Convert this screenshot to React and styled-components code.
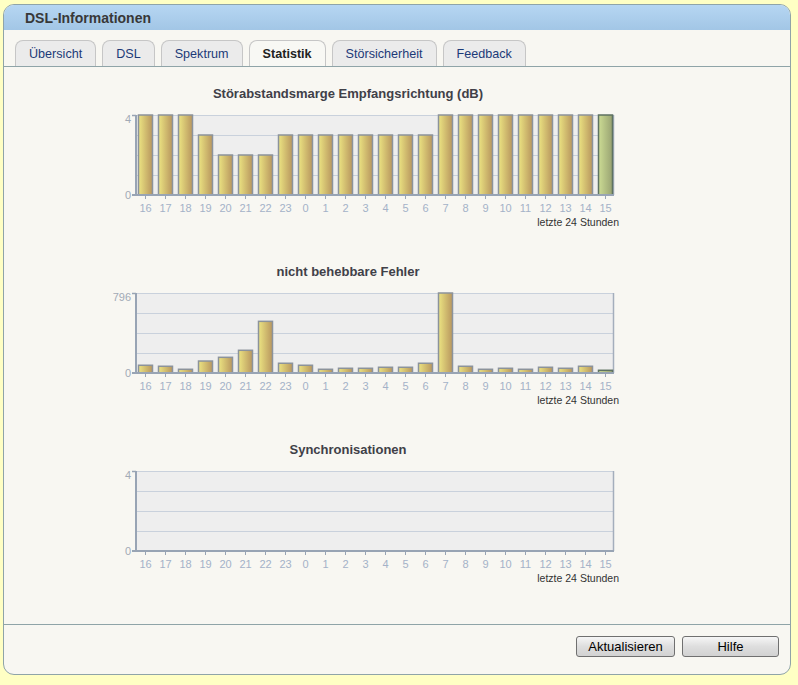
import React from "react";
import styled, { createGlobalStyle } from "styled-components";

const GlobalStyle = createGlobalStyle`
  html, body { margin: 0; padding: 0; }
  body {
    background: #ffffc4;
    font-family: "Liberation Sans", Arial, sans-serif;
    width: 798px;
    height: 685px;
    overflow: hidden;
  }
`;

const Page = styled.div`
  padding: 4px 7px 0 3px;
`;

const Panel = styled.div`
  width: 786px;
  border: 1px solid #8fa4a8;
  border-radius: 11px;
  background: #f8f7f2;
  overflow: hidden;
`;

const Header = styled.div`
  height: 25px;
  background: linear-gradient(to bottom, #b6d6f2, #a2c6e6);
  padding-left: 21px;
  display: flex;
  align-items: center;
  font-size: 14px;
  font-weight: bold;
  color: #383838;
`;

const TabBar = styled.div`
  display: flex;
  gap: 6px;
  padding: 10px 0 0 11px;
  border-bottom: 1px solid #8fa4a8;
`;

const Tab = styled.div`
  height: 25px;
  padding: 0 13px;
  display: flex;
  align-items: center;
  border: 1px solid #c6c6c6;
  border-bottom: none;
  border-radius: 8px 8px 0 0;
  background: ${(p) => (p.$active ? "#f8f8f4" : "#ebebeb")};
  color: ${(p) => (p.$active ? "#222" : "#1c3a78")};
  font-weight: ${(p) => (p.$active ? "bold" : "normal")};
  font-size: 12.6px;
`;

const Content = styled.div`
  height: 538px;
  padding-top: 19px;
  border-bottom: 1px solid #8fa4a8;
  display: flex;
  flex-direction: column;
  gap: 32px;
`;

const ChartBlock = styled.div`
  margin-left: 94px;
  display: flex;
  flex-direction: column;
  gap: 8px;
`;

const ChartTitle = styled.div`
  width: 500px;
  text-align: center;
  font-size: 13px;
  line-height: 16px;
  font-weight: bold;
  color: #404048;
`;

const Footer = styled.div`
  height: 49px;
  display: flex;
  justify-content: flex-end;
  align-items: flex-start;
  gap: 7px;
  padding: 11px 11px 0 0;
  box-sizing: border-box;
`;

const Button = styled.button`
  height: 21px;
  width: ${(p) => p.$w}px;
  padding: 0;
  border: 1px solid #707070;
  border-radius: 3px;
  background: linear-gradient(to bottom, #f6f6f6, #dedede 50%, #d2d2d2);
  font-family: "Liberation Sans", Arial, sans-serif;
  font-size: 13px;
  color: #000;
`;

const hours = [16, 17, 18, 19, 20, 21, 22, 23, 0, 1, 2, 3, 4, 5, 6, 7, 8, 9, 10, 11, 12, 13, 14, 15];

const X0 = 38;
const Y0 = 5;
const PW = 478;
const PH = 80;

function Chart({ id, max, values }) {
  return (
    <svg width="530" height="122" style={{ display: "block" }}>
      <defs>
        <linearGradient id={`g${id}`} x1="0" x2="1" y1="0" y2="0">
          <stop offset="0" stopColor="#ece482" />
          <stop offset="1" stopColor="#b8965e" />
        </linearGradient>
        <linearGradient id={`gg${id}`} x1="0" x2="1" y1="0" y2="0">
          <stop offset="0" stopColor="#ccdc94" />
          <stop offset="1" stopColor="#98a272" />
        </linearGradient>
      </defs>
      <rect x={X0} y={Y0} width={PW} height={PH} fill="#eeeeee" />
      {[0, 1, 2, 3].map((i) => (
        <line key={i} x1={X0} x2={X0 + PW} y1={Y0 + i * 20 + 0.5} y2={Y0 + i * 20 + 0.5} stroke="#c9d1dc" strokeWidth="1" />
      ))}
      <line x1={X0 + PW - 0.5} x2={X0 + PW - 0.5} y1={Y0} y2={Y0 + PH} stroke="#a4aebc" strokeWidth="1.5" />
      {values &&
        values.map((v, i) => {
          const h = Math.max(1, (v / max) * PH);
          const last = i === values.length - 1;
          return (
            <rect
              key={i}
              x={X0 + 2.5 + i * 20}
              y={Y0 + PH - h}
              width={14}
              height={h}
              fill={last ? `url(#gg${id})` : `url(#g${id})`}
              stroke={last ? "#5e7262" : "#8c939b"}
              strokeWidth="1.5"
            />
          );
        })}
      <line x1={X0 - 4} x2={X0} y1={Y0 + 0.5} y2={Y0 + 0.5} stroke="#98a4b4" strokeWidth="1.5" />
      <line x1={X0 - 4} x2={X0 + PW} y1={Y0 + PH} y2={Y0 + PH} stroke="#98a4b4" strokeWidth="2" />
      <line x1={X0} x2={X0} y1={Y0} y2={Y0 + PH} stroke="#98a4b4" strokeWidth="2" />
      {hours.map((h, i) => (
        <line key={i} x1={X0 + 9.5 + i * 20} x2={X0 + 9.5 + i * 20} y1={Y0 + PH} y2={Y0 + PH + 4} stroke="#98a4b4" strokeWidth="1" />
      ))}
      <g fontFamily="Liberation Sans, Arial, sans-serif" fontSize="11">
        <text x={X0 - 5} y={Y0 + 8} textAnchor="end" fill="#a2aab6">{max}</text>
        <text x={X0 - 5} y={Y0 + PH + 4} textAnchor="end" fill="#a2aab6">0</text>
        {hours.map((h, i) => (
          <text key={i} x={X0 + 9.5 + i * 20} y={Y0 + PH + 17} textAnchor="middle" fill="#a4b2c8">
            {h}
          </text>
        ))}
        <text x={521} y={Y0 + PH + 31} textAnchor="end" fontSize="10.5" fill="#333">letzte 24 Stunden</text>
      </g>
    </svg>
  );
}

const snr = [4, 4, 4, 3, 2, 2, 2, 3, 3, 3, 3, 3, 3, 3, 3, 4, 4, 4, 4, 4, 4, 4, 4, 4];
const errors = [77, 67, 37, 119, 156, 226, 514, 97, 77, 37, 47, 47, 57, 57, 97, 796, 67, 37, 47, 37, 57, 47, 67, 27];

const tabs = ["Übersicht", "DSL", "Spektrum", "Statistik", "Störsicherheit", "Feedback"];

export default function App() {
  return (
    <Page>
      <GlobalStyle />
      <Panel>
        <Header>DSL-Informationen</Header>
        <TabBar>
          {tabs.map((t) => (
            <Tab key={t} $active={t === "Statistik"}>{t}</Tab>
          ))}
        </TabBar>
        <Content>
          <ChartBlock>
            <ChartTitle>Störabstandsmarge Empfangsrichtung (dB)</ChartTitle>
            <Chart id="a" max={4} values={snr} />
          </ChartBlock>
          <ChartBlock>
            <ChartTitle>nicht behebbare Fehler</ChartTitle>
            <Chart id="b" max={796} values={errors} />
          </ChartBlock>
          <ChartBlock>
            <ChartTitle>Synchronisationen</ChartTitle>
            <Chart id="c" max={4} />
          </ChartBlock>
        </Content>
        <Footer>
          <Button $w={99}>Aktualisieren</Button>
          <Button $w={97}>Hilfe</Button>
        </Footer>
      </Panel>
    </Page>
  );
}
